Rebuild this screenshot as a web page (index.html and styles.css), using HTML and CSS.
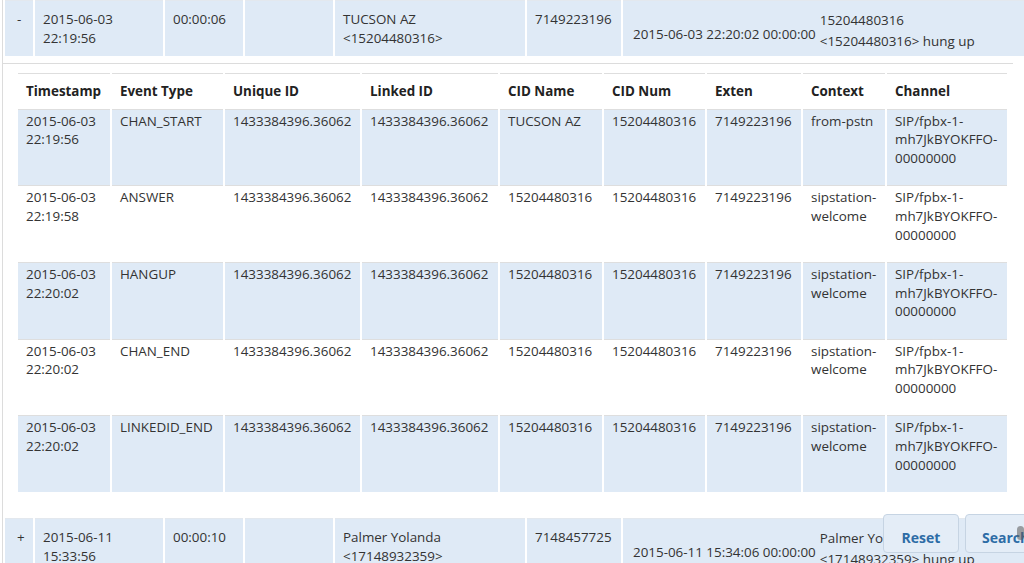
FILE: index.html
```html
<!DOCTYPE html>
<html lang="en">
<head>
<meta charset="utf-8">
<title>CDR report</title>
<link rel="stylesheet" href="styles.css">
</head>
<body>
<div class="panel">
  <div class="call">
    <div class="c toggle">-</div>
    <div class="c">2015-06-03<br>22:19:56</div>
    <div class="c">00:00:06</div>
    <div class="c"></div>
    <div class="c">TUCSON AZ<br>&lt;15204480316&gt;</div>
    <div class="c">7149223196</div>
    <div class="c end"><span class="end-time">2015-06-03 22:20:02 00:00:00</span><span class="who">15204480316<br>&lt;15204480316&gt; hung up</span></div>
  </div>

  <div class="detail">
    <div class="events">
      <div class="ev head">
        <div class="e">Timestamp</div><div class="e">Event Type</div><div class="e">Unique ID</div><div class="e">Linked ID</div><div class="e">CID Name</div><div class="e">CID Num</div><div class="e">Exten</div><div class="e">Context</div><div class="e">Channel</div>
      </div>
      <div class="ev odd">
        <div class="e">2015-06-03<br>22:19:56</div><div class="e">CHAN_START</div><div class="e">1433384396.36062</div><div class="e">1433384396.36062</div><div class="e">TUCSON AZ</div><div class="e">15204480316</div><div class="e">7149223196</div><div class="e">from-pstn</div><div class="e">SIP/fpbx-1-<br>mh7JkBYOKFFO-<br>00000000</div>
      </div>
      <div class="ev">
        <div class="e">2015-06-03<br>22:19:58</div><div class="e">ANSWER</div><div class="e">1433384396.36062</div><div class="e">1433384396.36062</div><div class="e">15204480316</div><div class="e">15204480316</div><div class="e">7149223196</div><div class="e">sipstation-<br>welcome</div><div class="e">SIP/fpbx-1-<br>mh7JkBYOKFFO-<br>00000000</div>
      </div>
      <div class="ev odd">
        <div class="e">2015-06-03<br>22:20:02</div><div class="e">HANGUP</div><div class="e">1433384396.36062</div><div class="e">1433384396.36062</div><div class="e">15204480316</div><div class="e">15204480316</div><div class="e">7149223196</div><div class="e">sipstation-<br>welcome</div><div class="e">SIP/fpbx-1-<br>mh7JkBYOKFFO-<br>00000000</div>
      </div>
      <div class="ev">
        <div class="e">2015-06-03<br>22:20:02</div><div class="e">CHAN_END</div><div class="e">1433384396.36062</div><div class="e">1433384396.36062</div><div class="e">15204480316</div><div class="e">15204480316</div><div class="e">7149223196</div><div class="e">sipstation-<br>welcome</div><div class="e">SIP/fpbx-1-<br>mh7JkBYOKFFO-<br>00000000</div>
      </div>
      <div class="ev odd">
        <div class="e">2015-06-03<br>22:20:02</div><div class="e">LINKEDID_END</div><div class="e">1433384396.36062</div><div class="e">1433384396.36062</div><div class="e">15204480316</div><div class="e">15204480316</div><div class="e">7149223196</div><div class="e">sipstation-<br>welcome</div><div class="e">SIP/fpbx-1-<br>mh7JkBYOKFFO-<br>00000000</div>
      </div>
    </div>
  </div>

  <div class="call">
    <div class="c toggle">+</div>
    <div class="c">2015-06-11<br>15:33:56</div>
    <div class="c">00:00:10</div>
    <div class="c"></div>
    <div class="c">Palmer Yolanda<br>&lt;17148932359&gt;</div>
    <div class="c">7148457725</div>
    <div class="c end"><span class="end-time">2015-06-11 15:34:06 00:00:00</span><span class="who">Palmer Yolanda<br>&lt;17148932359&gt; hung up</span></div>
  </div>
</div>

<div class="actions">
  <button class="btn btn-reset" type="button">Reset</button>
  <button class="btn btn-search" type="button">Search</button>
  <span class="thumb"></span>
</div>
</body>
</html>
```

FILE: styles.css
```css
html, body {
  margin: 0;
  padding: 0;
  overflow: hidden;
  background: #fff;
}

body {
  font-family: "Open Sans", "DejaVu Sans", sans-serif;
  font-size: 13.4px;
  line-height: 18.57px;
  color: #333;
  width: 1024px;
  height: 563px;
}

.panel {
  margin-left: 2px;
  border-left: 1px solid #dcdcdc;
  min-height: 563px;
  width: 1200px;
}

/* outer call rows */
.call {
  display: grid;
  grid-template-columns: 28px 128px 78px 88px 190px 94px 477px;
  column-gap: 2px;
  padding-left: 2px;
}

.c {
  background: #dfeaf6;
  border-top: 1px solid #e3e8ee;
  padding: 9px 8px;
  white-space: nowrap;
}

.toggle {
  padding-left: 12px;
  padding-right: 0;
}

.end {
  display: flex;
  align-items: flex-start;
  padding-left: 10px;
}

.end-time {
  margin-top: 15px;
  margin-right: 4px;
}

.who {
  line-height: 21px;
  margin-bottom: -5px;
}

/* expanded detail */
.detail {
  margin-top: 7px;
  border-top: 1px solid #dcdcdc;
  width: 995px;
  padding: 9px 0 26px 15px;
}

.ev {
  display: grid;
  grid-template-columns: 92px 111px 135px 136px 102px 101px 94px 82px 120px;
  column-gap: 2px;
}

.e {
  border-top: 1px solid #dedede;
  padding: 2px 8px 18px;
  background: #fff;
  white-space: nowrap;
}

.ev.odd .e {
  background: #dfeaf6;
}

.ev.head .e {
  padding: 8px 8px;
  font-weight: 700;
  color: #222;
}

/* floating action buttons */
.actions {
  position: fixed;
  left: 883px;
  top: 514px;
  display: flex;
  gap: 6px;
}

.btn {
  height: 39px;
  border: 1px solid #c6d4e3;
  border-radius: 4px;
  background: #e4edf7;
  color: #2d6ca6;
  font-family: "Open Sans", "DejaVu Sans", sans-serif;
  font-size: 14px;
  font-weight: 700;
  padding: 7px 0 0;
  box-sizing: border-box;
}

.btn-reset {
  width: 76px;
}

.btn-search {
  width: 90px;
  text-align: left;
  padding-left: 16px;
}

.thumb {
  position: absolute;
  left: 134px;
  top: 12px;
  width: 7px;
  height: 14px;
  border-radius: 4px;
  background: rgba(90, 90, 90, 0.55);
}
```
